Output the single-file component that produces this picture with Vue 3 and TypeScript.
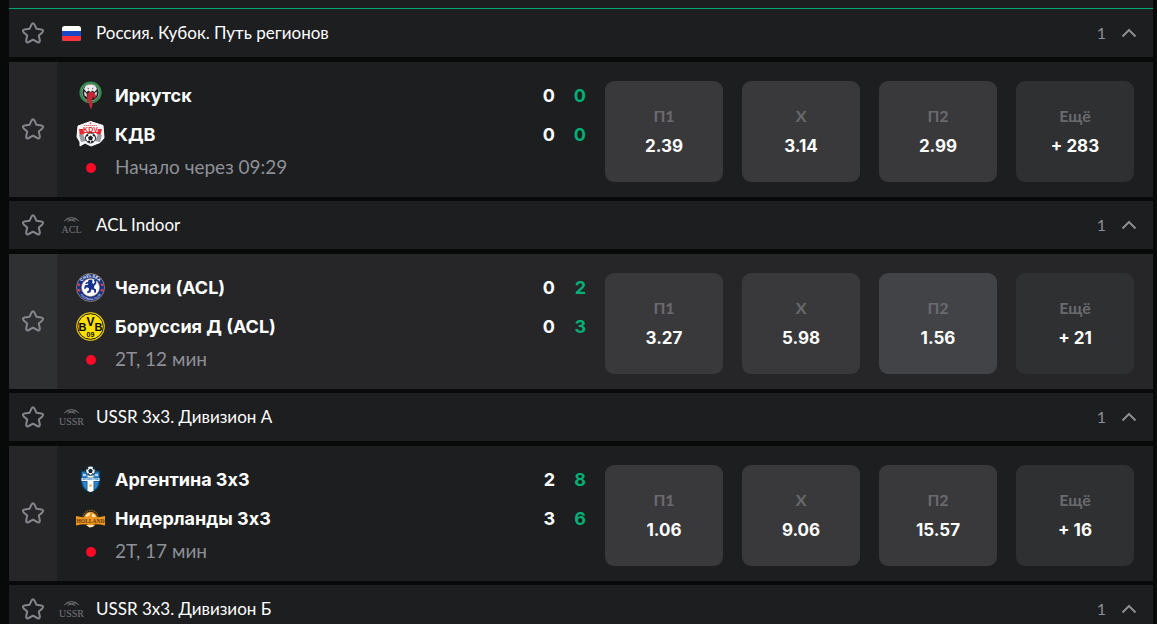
<script setup lang="ts">
import { reactive } from 'vue'

interface Team { name: string; logo: string; total: number; period: number }
interface Odd { label: string; value: string; more?: boolean; active?: boolean }
interface Match { teams: Team[]; status: string; odds: Odd[]; active?: boolean; starred: boolean }
interface League { title: string; mark: string; count: number; open: boolean; starred: boolean; matches: Match[] }

const odds = (p1: string, x: string, p2: string, more: string, active = ''): Odd[] => [
  { label: 'П1', value: p1, active: active === 'П1' },
  { label: 'X', value: x, active: active === 'X' },
  { label: 'П2', value: p2, active: active === 'П2' },
  { label: 'Ещё', value: more, more: true },
]

const leagues = reactive<League[]>([
  {
    title: 'Россия. Кубок. Путь регионов', mark: 'flag', count: 1, open: true, starred: false,
    matches: [{
      teams: [
        { name: 'Иркутск', logo: 'irkutsk', total: 0, period: 0 },
        { name: 'КДВ', logo: 'kdv', total: 0, period: 0 },
      ],
      status: 'Начало через 09:29', odds: odds('2.39', '3.14', '2.99', '+ 283'), starred: false,
    }],
  },
  {
    title: 'ACL Indoor', mark: 'ACL', count: 1, open: true, starred: false,
    matches: [{
      teams: [
        { name: 'Челси (ACL)', logo: 'chelsea', total: 0, period: 2 },
        { name: 'Боруссия Д (ACL)', logo: 'bvb', total: 0, period: 3 },
      ],
      status: '2Т, 12 мин', odds: odds('3.27', '5.98', '1.56', '+ 21', 'П2'), active: true, starred: false,
    }],
  },
  {
    title: 'USSR 3x3. Дивизион А', mark: 'USSR', count: 1, open: true, starred: false,
    matches: [{
      teams: [
        { name: 'Аргентина 3x3', logo: 'argentina', total: 2, period: 8 },
        { name: 'Нидерланды 3x3', logo: 'holland', total: 3, period: 6 },
      ],
      status: '2Т, 17 мин', odds: odds('1.06', '9.06', '15.57', '+ 16'), starred: false,
    }],
  },
  { title: 'USSR 3x3. Дивизион Б', mark: 'USSR', count: 1, open: true, starred: false, matches: [] },
])

const starPath = 'M8.6 7.7 10.6 3.4Q12 .9 13.4 3.4L15.4 7.7 20.4 8.500Q23.300 9.200 21.300 11.400L17.800 14.600 18.800 19.300Q19.100 22.400 16.300 21L12 18.700 7.700 21Q4.900 22.400 5.200 19.300L6.200 14.600 2.700 11.400Q.7 9.200 3.600 8.500Z'
</script>

<template>
  <main class="page">
    <div class="tabs-edge"></div>
    <section v-for="league in leagues" :key="league.title" class="league">
      <header class="league-head">
        <button class="star" type="button" :aria-label="'В избранное: ' + league.title" :aria-pressed="league.starred" @click="league.starred = !league.starred">
          <svg viewBox="0 0 24 24"><path :d="starPath" /></svg>
        </button>
        <span class="mark">
          <svg v-if="league.mark === 'flag'" class="flag" viewBox="0 0 19 15">
            <clipPath id="flag-clip"><rect width="19" height="15" rx="2.500" /></clipPath>
            <g clip-path="url(#flag-clip)">
              <rect width="19" height="15" fill="#fff" />
              <rect y="5" width="19" height="10" fill="#1c47c4" />
              <rect y="10" width="19" height="5" fill="#fb323c" />
            </g>
          </svg>
          <svg v-else class="wordmark" viewBox="0 0 27 20">
            <path d="M6 6Q9 2.600 13.500 4.500 18 2.600 21 6M8.500 3.600Q13.500 1.400 18.500 3.600M9.500 6.200Q13.500 4.200 17.500 6.200" fill="none" stroke="#77787b" stroke-width=".9" />
            <text x="13.500" y="18" text-anchor="middle" font-size="10">{{ league.mark }}</text>
          </svg>
        </span>
        <h2 class="league-title">{{ league.title }}</h2>
        <span class="count">{{ league.count }}</span>
        <button class="toggle" type="button" :aria-label="'Свернуть: ' + league.title" :aria-expanded="league.open" @click="league.open = !league.open">
          <svg viewBox="0 0 16 10"><path d="M1.500 8.500 8 2l6.500 6.500" /></svg>
        </button>
      </header>

      <template v-if="league.open">
        <article v-for="match in league.matches" :key="match.status" class="match" :class="{ active: match.active }">
          <button class="star star-cell" type="button" aria-label="Матч в избранное" :aria-pressed="match.starred" @click="match.starred = !match.starred">
            <svg viewBox="0 0 24 24"><path :d="starPath" /></svg>
          </button>
          <div class="match-body">
            <div class="info">
              <div v-for="team in match.teams" :key="team.name" class="team">
                <svg class="logo" viewBox="0 0 29 29">
                  <g v-if="team.logo === 'irkutsk'">
                    <circle cx="14.500" cy="11.500" r="10" fill="#202627" stroke="#348a4e" stroke-width="2.200" />
                    <circle cx="14.500" cy="11.500" r="8.500" fill="none" stroke="#a9c4b0" stroke-width=".8" />
                    <path d="M10 4.500 14.500 3.500 19 4.500 21 8 18.500 11 16 9.500 14.500 12 13 9.500 10.500 11 8 8z" fill="#ededed" />
                    <path d="M8 10.500 10.500 12 11 16 8.500 14.500zM21 10.500 18.500 12 19.500 15.500 20.500 14.500z" fill="#d6d6d6" />
                    <path d="M11.500 6.500 13 7.500 12 8.500zM17.500 6.500 16 7.500 17 8.500z" fill="#444" />
                    <path d="M11.500 13q3-4 6-1.500l2.300 2.500-.3 4.500-2.500-3-1 3 .6 5-1.600 5-1.800-4.500.3-4.500-1.500 2.500-1.200-.5z" fill="#c72634" />
                  </g>
                  <g v-else-if="team.logo === 'kdv'">
                    <path d="M14.500 1.500 27 5.500 28 18 24 22.500 15 26 9 23 4 26 4 22 1 17 2 6z" fill="#f7f7f7" stroke="#fff" stroke-linejoin="round" />
                    <path d="M3 9h23l-2 8-4-4H9l-5 4z" fill="#e92a35" />
                    <path d="M3 15l4-1 3 7-5 1zM26 15l-4-1-3 7 5 1z" fill="#989ca1" />
                    <path d="M7 6h15l-.5 6h-14z" fill="#fff" />
                    <path d="M8 5.500h13" stroke="#e92a35" stroke-width=".7" stroke-dasharray="1.500 .5" />
                    <circle cx="14.500" cy="3.300" r=".8" fill="#e92a35" />
                    <text x="14.500" y="11.800" text-anchor="middle" class="t-sans" font-size="7" fill="#de1d29">KDV</text>
                    <circle cx="14.500" cy="18" r="5" fill="#fff" stroke="#202124" />
                    <path d="M14.500 15.500l2.500 1.800-1 2.900h-3l-1-2.900zM10 15l2-1 .5 1.500-2 1.500zM19 15l-2-1-.5 1.500 2 1.500zM11.500 22l1-1.500 1.500.5v2zM17.500 22l-1-1.500-1.500.5v2z" fill="#202124" />
                  </g>
                  <g v-else-if="team.logo === 'chelsea'">
                    <circle cx="14.500" cy="14.500" r="14" fill="#18318c" stroke="#a99765" stroke-width=".8" />
                    <circle cx="14.500" cy="14.500" r="9" fill="#fff" stroke="#a99765" stroke-width=".6" />
                    <path id="arc-top" d="M4.200 14.500a10.300 10.300 0 0 1 20.600 0" fill="none" />
                    <path id="arc-bottom" d="M1.900 14.500a12.600 12.600 0 0 0 25.200 0" fill="none" />
                    <text class="t-sans" font-size="4.200" fill="#fff"><textPath href="#arc-top" startOffset="50%" text-anchor="middle">CHELSEA</textPath></text>
                    <text class="t-sans" font-size="2.800" fill="#d4d8eb"><textPath href="#arc-bottom" startOffset="50%" text-anchor="middle">FOOTBALL CLUB</textPath></text>
                    <g fill="#e53b5b"><circle cx="3" cy="11.800" r="1.300" /><circle cx="3" cy="17.200" r="1.300" /><circle cx="26" cy="11.800" r="1.300" /><circle cx="26" cy="17.200" r="1.300" /></g>
                    <path d="M12.500 7l3-.5 1.300 1.500-.8 1.800 1.500 1.200 1.300-2-1-2 2.300-.5.200 4-2 2.300-.3 2.500 2 1v3l-1.500 1-.5-3-2.500-1-1 3-3 1-.5-1.500 2-1.500-.2-2.300-2.300-.7-1.500 2-1-1 1-3 3-.5.3-1.500-2.500 1-.5-1.200 2.700-1.300z" fill="#18318c" />
                  </g>
                  <g v-else-if="team.logo === 'bvb'">
                    <circle cx="14.500" cy="14.500" r="14" fill="#ffe100" stroke="#d9c31b" stroke-width=".8" />
                    <circle cx="14.500" cy="14.500" r="12.800" fill="#ffe100" stroke="#15150d" stroke-width="1" />
                    <g class="t-sans" fill="#080808" text-anchor="middle">
                      <text x="6.500" y="19" font-size="11">B</text>
                      <text x="14.500" y="13.500" font-size="12">V</text>
                      <text x="22.500" y="19" font-size="11">B</text>
                      <text x="14.500" y="25" font-size="7">09</text>
                    </g>
                  </g>
                  <g v-else-if="team.logo === 'argentina'">
                    <path d="M5 5.500q5 1 9.500-2 4.500 3 9.500 2v12q-1 8-9.500 10-8.500-2-9.500-10z" fill="#17649b" stroke="#102c40" stroke-width="1.400" />
                    <path d="M11.500 6h6v20l-3 1-3-1z" fill="#fff" />
                    <path d="M6 7.500h5v5H6zM18 7.500h5v5h-5z" fill="#2d86d2" />
                    <path d="M7 10h3M19 10h3" stroke="#dceefa" stroke-width="1.500" />
                    <path d="M5.500 13h18v3h-18z" fill="#eef6fb" />
                    <text x="14.500" y="15.400" text-anchor="middle" class="t-sans" font-size="2.700" fill="#2d76b8">ARGENTINA</text>
                    <path d="M7 17h3.500v7.500Q7.500 22 7 17zM22 17h-3.500v7.500Q21.500 22 22 17z" fill="#2d86d2" />
                    <circle cx="14.500" cy="20.500" r="1.500" fill="#f3c45d" />
                    <circle cx="14.500" cy="5.700" r="4.700" fill="#fff" stroke="#10283a" />
                    <path d="M14.500 3.500l2.300 1.700-.9 2.700h-2.800l-.9-2.700zM10.500 3l1.500-1 .5 1.500-1.500 1.500zM18.500 3 17 2l-.5 1.500L18 5zM11.500 9.500l1-1.500 1.500 2zM17.500 9.500l-1-1.500-1.500 2z" fill="#10283a" />
                  </g>
                  <g v-else>
                    <circle cx="14.500" cy="14" r="7.700" fill="none" stroke="#b77117" stroke-width="1.200" stroke-dasharray="1 .9" />
                    <circle cx="14.500" cy="14.500" r="6.700" fill="#ef941b" />
                    <path d="M9.500 11.500q2-3 5-3l-1 3-3 1.500zM16 9.500l3 1.500 1 2h-4zM10 21h9l-2.500 2-3 .5z" fill="#ffe5b5" />
                    <path d="M0 12q7 2 14.500 1.200Q22 14 29 12v9.500q-7-2-14.500-1Q7 19.500 0 21.500z" fill="#f0951e" />
                    <text x="14.500" y="18.900" text-anchor="middle" class="t-serif" font-size="5.500" fill="#5a3a10">HOLLAND</text>
                  </g>
                </svg>
                <span class="team-name">{{ team.name }}</span>
                <span class="score">{{ team.total }}</span>
                <span class="score score-period">{{ team.period }}</span>
              </div>
              <div class="status"><i class="live"></i><span>{{ match.status }}</span></div>
            </div>
            <div class="odds">
              <button v-for="odd in match.odds" :key="odd.label" type="button" class="odd" :class="{ more: odd.more, picked: odd.active }">
                <span class="odd-label">{{ odd.label }}</span>
                <span class="odd-value">{{ odd.value }}</span>
              </button>
            </div>
          </div>
        </article>
      </template>
    </section>
  </main>
</template>

<style>
html { background: #080a0a; scrollbar-width: none; }
body { margin: 0; }
</style>

<style scoped>
.page {
  padding: 0 4px 0 9px;
  background: #080a0a;
  color: #fff;
  font-family: Lato, "Noto Sans", sans-serif;
}
.page *, .page { box-sizing: border-box; }
button { border: 0; padding: 0; margin: 0; background: none; color: inherit; font: inherit; cursor: pointer; }
.tabs-edge {
  height: 9px;
  background: #1d1e20;
  border-bottom: 1px solid #00a870;
}
.league { margin-bottom: 4px; }
.league-head {
  display: flex;
  align-items: center;
  height: 48px;
  padding-right: 16px;
  background: #1d1e20;
}
.star { display: flex; align-items: center; justify-content: center; width: 48px; height: 48px; flex: none; }
.star svg { width: 24px; height: 24px; fill: none; stroke: #85868c; stroke-width: 2; stroke-linejoin: round; }
.star[aria-pressed="true"] svg { fill: #85868c; }
.mark { display: flex; align-items: center; justify-content: center; width: 27px; margin: 0 11px 0 1px; }
.flag { width: 19px; height: 15px; }
.wordmark { width: 27px; height: 20px; overflow: visible; }
.wordmark text { font-family: "Liberation Serif", serif; fill: #77787b; }
.league-title { flex: 1; margin: 0; font-size: 17px; line-height: 24px; font-weight: 400; }
.count { margin-right: 15px; font-size: 16px; line-height: 24px; color: #8e9097; }
.toggle { display: flex; align-items: center; height: 48px; }
.toggle svg { width: 16px; height: 10px; fill: none; stroke: #8c8d92; stroke-width: 2; }
.toggle[aria-expanded="false"] svg { transform: rotate(180deg); }
.match { display: flex; margin-top: 5px; background: #1d1e20; }
.star-cell { height: auto; padding-bottom: 2px; background: #262628; }
.match.active { background: #262628; }
.match.active .star-cell { background: #2f3032; }
.match-body {
  flex: 1;
  min-width: 0;
  display: grid;
  grid-template-columns: 510fr 529fr;
  column-gap: 19px;
  padding: 0 19px;
}
.info { min-width: 0; padding: 14px 0 16px; }
.team { display: flex; align-items: center; height: 39px; font-family: Inter, "Noto Sans", sans-serif; font-size: 18px; font-weight: 700; }
.logo { width: 29px; height: 29px; flex: none; margin-right: 10px; }
.t-sans { font-family: "Liberation Sans", sans-serif; font-weight: 700; }
.t-serif { font-family: "Liberation Serif", serif; font-weight: 700; }
.team-name { flex: 1; min-width: 0; white-space: nowrap; overflow: hidden; text-overflow: ellipsis; }
.score { width: 31px; text-align: right; }
.score-period { color: #00b074; }
.status { display: flex; align-items: center; height: 27px; font-size: 19px; line-height: 25px; color: #8e9097; }
.status span { padding-bottom: 2px; }
.live { width: 10px; height: 10px; margin: 0 19px 0 10px; border-radius: 50%; background: #ff0a26; }
.odds { display: grid; grid-template-columns: repeat(4, minmax(0, 1fr)); gap: 19px; padding: 19px 0 15px; }
.odd { display: flex; flex-direction: column; align-items: center; justify-content: center; padding-bottom: 2px; border-radius: 9px; background: #39393b; line-height: 30px; }
.odd.more { background: #2f3032; }
.odd.picked { background: #424347; }
.odd-label { font-size: 16px; font-weight: 700; color: #696a6e; }
.odd-value { font-family: Inter, "Noto Sans", sans-serif; font-size: 17px; font-weight: 700; }
</style>
